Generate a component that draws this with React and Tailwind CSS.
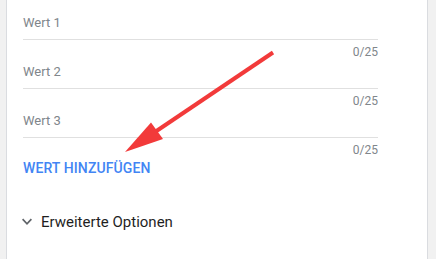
import React from "react";

function Field({ label }) {
  return (
    <div className="flex flex-col">
      <div className="h-[27px] pb-[6px] border-b border-[#e0e0e0] text-[13px] leading-[20px] text-[#80868b]">
        {label}
      </div>
      <div className="mt-[4px] h-[16px] text-right text-[12px] leading-[16px] text-[#80868b]">0/25</div>
    </div>
  );
}

export default function App() {
  return (
    <div
      className="relative w-[436px] h-[259px] overflow-hidden bg-[#f1f1f1] flex"
      style={{ fontFamily: "Roboto, 'Liberation Sans', sans-serif" }}
    >
      <div className="ml-[6px] w-[422px] h-full bg-white border-x border-[#dadce0] pl-[16px] pt-[13px]">
        <div className="w-[355px] flex flex-col gap-[2px]">
          <Field label="Wert 1" />
          <Field label="Wert 2" />
          <Field label="Wert 3" />
        </div>
        <div className="text-[14px] leading-[20px] font-medium text-[#4285f4] uppercase tracking-[0.1px]">Wert hinzufügen</div>
        <div className="mt-[32px] flex items-center h-[24px]">
          <svg width="10" height="8" viewBox="0 0 10 8" className="-ml-[1px] mr-[9px] -mt-[1px]">
            <path d="M0.6 1.2 L5 5.8 L9.4 1.2" fill="none" stroke="#5f6368" strokeWidth="1.7" />
          </svg>
          <span className="text-[15px] leading-[24px] text-[#1f1f1f]">Erweiterte Optionen</span>
        </div>
      </div>
      <svg className="absolute left-0 top-0 pointer-events-none" width="436" height="259" viewBox="0 0 436 259">
        <line x1="273" y1="52.5" x2="152" y2="134" stroke="#f23a3a" strokeWidth="4" strokeLinecap="butt" />
        <polygon points="125,152 151,122.5 163,139" fill="#f23a3a" />
      </svg>
    </div>
  );
}
